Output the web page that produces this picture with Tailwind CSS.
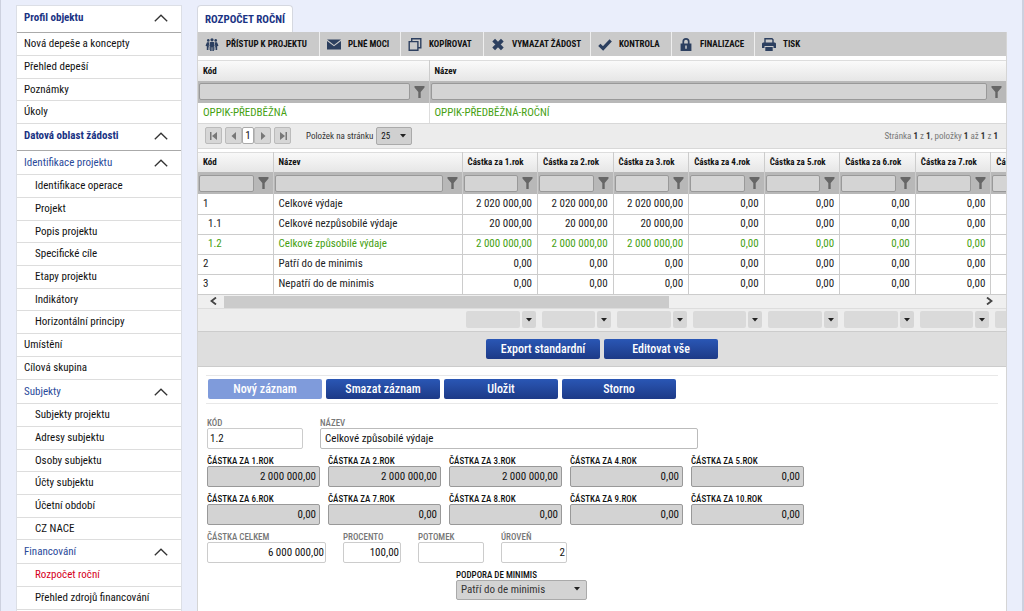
<!DOCTYPE html>
<html lang="cs">
<head>
  <meta charset="UTF-8" />
  <meta name="viewport" content="width=device-width, initial-scale=1" />
  <title>Rozpočet roční</title>
  <script src="https://cdn.jsdelivr.net/npm/@tailwindcss/browser@4"></script>
</head>
<body class="bg-[#eaeefb] text-[#111] font-['Roboto_Condensed','Liberation_Sans_Narrow',Roboto,sans-serif] text-[11px] leading-4">
  <!-- icons -->
  <svg class="hidden">
    <symbol id="i-funnel" viewBox="0 0 11 12"><path d="M.5 0h10v1.500L6.700 6v6H4.300V6L.5 1.500z" fill="#666" /></symbol>
    <symbol id="i-up" viewBox="0 0 14 8"><path d="M.8 7.200 7 1.200l6.200 6" fill="none" stroke="#333" stroke-width="1.300" /></symbol>
    <symbol id="i-people" viewBox="0 0 14 14">
      <g fill="#2c3f5f">
        <circle cx="7" cy="2" r="1.700" /><circle cx="3" cy="2.600" r="1.400" /><circle cx="11" cy="2.600" r="1.400" />
        <path d="M5 4.200h4l.9 4.600-.9.300V14H7.400v-4h-.8v4H5V9.100l-.9-.3zM1.600 4.600h2.600l-.8 4.600.8.600V13H3.300v-3h-.6v3H1.400V9L0 8.300zM12.400 4.600H9.800l.8 4.600-.8.600V13h.9v-3h.6v3h1.300V9l1.400-.7z" />
      </g>
    </symbol>
    <symbol id="i-mail" viewBox="0 0 14 10"><path d="M0 0h14L7 5.400zM0 1.500l7 5.300 7-5.300V10H0z" fill="#2c3f5f" /></symbol>
    <symbol id="i-copy" viewBox="0 0 13 13">
      <path d="M3.200 3.200V.7h9.100v9.100H9.600M.7 3.600h8.700v8.700H.7z" fill="none" stroke="#2c3f5f" stroke-width="1.400" />
    </symbol>
    <symbol id="i-cross" viewBox="0 0 12 12"><path d="M2 2l8 8M10 2l-8 8" stroke="#2c3f5f" stroke-width="3.600" /></symbol>
    <symbol id="i-check" viewBox="0 0 14 12"><path d="M1.300 6.300l3.800 3.600L12.700 1.800" fill="none" stroke="#2c3f5f" stroke-width="3.200" /></symbol>
    <symbol id="i-lock" viewBox="0 0 10 12">
      <path d="M2.500 6V3.300a2.500 2.500 0 0 1 5 0V6" fill="none" stroke="#2c3f5f" stroke-width="1.600" />
      <path d="M0 5h10v7H0zm4.300 2v3h1.400V7z" fill="#2c3f5f" fill-rule="evenodd" />
    </symbol>
    <symbol id="i-print" viewBox="0 0 14 13">
      <path d="M3 5V.7h7l1 1V5" fill="none" stroke="#2c3f5f" stroke-width="1.400" />
      <path d="M1 4.500h12l1 1V10h-2.500V8h-9v2H0V5.500zM3.300 9h7.400v4H3.300z" fill="#2c3f5f" />
    </symbol>
    <symbol id="i-down" viewBox="0 0 6 4"><path d="M0 0h6L3 3.500z" fill="#222" /></symbol>
    <symbol id="i-first" viewBox="0 0 8 8"><path d="M0 0h1.500v8H0zM7 0v8L2 4z" fill="#777" /></symbol>
    <symbol id="i-prev" viewBox="0 0 8 8"><path d="M6 0v8L1.500 4z" fill="#777" /></symbol>
    <symbol id="i-next" viewBox="0 0 8 8"><path d="M2 0v8l4.500-4z" fill="#777" /></symbol>
    <symbol id="i-last" viewBox="0 0 8 8"><path d="M8 0H6.500v8H8zM1 0v8l5-4z" fill="#777" /></symbol>
    <symbol id="i-left" viewBox="0 0 7 8"><path d="M6 .5 1.500 4 6 7.500" fill="none" stroke="#444" stroke-width="1.800" /></symbol>
    <symbol id="i-right" viewBox="0 0 7 8"><path d="M1 .5 5.500 4 1 7.500" fill="none" stroke="#444" stroke-width="1.800" /></symbol>
  </svg>

  <div class="flex h-screen overflow-hidden border-l border-r-2 border-[#cdd1df] pt-[5px] pr-[15px] pl-[15px]">
    <!-- left menu -->
    <nav id="menu" class="w-[166px] shrink-0 border-x border-t border-[#dcdfe6] bg-white"></nav>

    <main class="ml-[15px] flex min-w-0 flex-1 flex-col">
      <div class="flex">
        <a href="#" class="h-[27px] rounded-t border border-b-0 border-[#d5d8e0] bg-white px-[7px] pt-1 text-[11px] leading-5 font-bold text-[#1a3384]">ROZPOČET ROČNÍ</a>
      </div>

      <div class="min-w-0 flex-1 border-x border-[#d5d5d5] bg-white">
        <!-- toolbar -->
        <div id="toolbar" class="flex h-6 bg-[#cacaca]"></div>

        <!-- budget list -->
        <table class="mt-1 w-full table-fixed border-t border-[#ddd]">
          <colgroup><col class="w-[231px]" /><col /></colgroup>
          <thead>
            <tr class="h-5 bg-linear-to-b from-[#fafafa] to-[#e6e6e6] text-left text-[9px]">
              <th class="border-r border-[#ccc] pl-[5px]">Kód</th>
              <th class="pl-[5px]">Název</th>
            </tr>
            <tr class="h-[22px] bg-[#b8b8b8]">
              <td class="border-r border-[#ccc] px-[1px]">
                <div class="flex items-center gap-1"><input aria-label="Filtr Kód" class="h-[17px] min-w-0 flex-1 rounded-xs border border-[#999] bg-[#d4d4d4]" /><svg class="mr-[3px] h-3 w-[11px]"><use href="#i-funnel" /></svg></div>
              </td>
              <td class="px-[1px]">
                <div class="flex items-center gap-1"><input aria-label="Filtr Název" class="h-[17px] min-w-0 flex-1 rounded-xs border border-[#999] bg-[#d4d4d4]" /><svg class="mr-[3px] h-3 w-[11px]"><use href="#i-funnel" /></svg></div>
              </td>
            </tr>
          </thead>
          <tbody>
            <tr class="h-5 text-[#45a011]">
              <td class="border-r border-[#ddd] pl-[5px]">OPPIK-PŘEDBĚŽNÁ</td>
              <td class="pl-[5px]">OPPIK-PŘEDBĚŽNÁ-ROČNÍ</td>
            </tr>
          </tbody>
        </table>

        <!-- paging -->
        <div class="flex h-[26px] items-center border-y border-[#d8d8d8] bg-[#ececec] pr-2 pl-[7px] text-[9px]">
          <button aria-label="První" class="flex h-[17px] w-[17px] items-center justify-center rounded-xs border border-[#bbb] bg-[#d6d6d6]"><svg class="size-2"><use href="#i-first" /></svg></button>
          <button aria-label="Předchozí" class="ml-[3px] flex h-[17px] w-[17px] items-center justify-center rounded-xs border border-[#bbb] bg-[#d6d6d6]"><svg class="size-2"><use href="#i-prev" /></svg></button>
          <button class="h-[17px] w-3 rounded-xs border border-[#aaa] bg-white text-[11px] leading-[15px]">1</button>
          <button aria-label="Další" class="flex h-[17px] w-[17px] items-center justify-center rounded-xs border border-[#bbb] bg-[#d6d6d6]"><svg class="size-2"><use href="#i-next" /></svg></button>
          <button aria-label="Poslední" class="ml-[3px] flex h-[17px] w-[17px] items-center justify-center rounded-xs border border-[#bbb] bg-[#d6d6d6]"><svg class="size-2"><use href="#i-last" /></svg></button>
          <label for="pageSize" class="ml-[15px] text-[#333]">Položek na stránku</label>
          <div class="relative ml-[3px]">
            <select id="pageSize" class="h-[18px] w-9 appearance-none rounded-xs border border-[#aaa] bg-[#d0d0d0] pl-1 text-[9px]"><option>25</option></select>
            <svg class="pointer-events-none absolute top-[7px] right-[6px] h-1 w-[6px]"><use href="#i-down" /></svg>
          </div>
          <span class="ml-auto text-[#777]">Stránka <b class="text-[#333]">1</b> z <b class="text-[#333]">1</b>, položky <b class="text-[#333]">1</b> až <b class="text-[#333]">1</b> z <b class="text-[#333]">1</b></span>
        </div>

        <!-- budget items -->
        <div class="mt-[3px] overflow-hidden">
          <table class="w-[1020px] table-fixed border-t border-[#ddd]">
            <colgroup><col class="w-[75px]" /><col class="w-[189px]" /><col span="10" /></colgroup>
            <thead id="head"></thead>
            <tbody id="rows"></tbody>
          </table>
        </div>
        <div class="flex h-[13px] items-center bg-[#efefef] pr-[13px] pl-3">
          <svg class="h-2 w-[7px] shrink-0"><use href="#i-left" /></svg>
          <div class="mx-[7px] h-full flex-1 pt-[1px]"><div class="h-full w-[59%] bg-[#cbcbcb]"></div></div>
          <svg class="h-2 w-[7px] shrink-0"><use href="#i-right" /></svg>
        </div>
        <div class="overflow-hidden border-t border-[#ddd] bg-[#ededed]">
          <div id="sums" class="grid h-[22px] w-[1020px] grid-cols-[264px_repeat(10,1fr)] items-center"></div>
        </div>
        <div class="flex h-9 items-center justify-center gap-1 border-y border-[#ccc] bg-[#dedede]">
          <button class="h-5 w-[114px] rounded-xs bg-linear-to-b from-[#2a57b5] to-[#1d3a87] text-[12px] font-medium text-white">Export standardní</button>
          <button class="h-5 w-[114px] rounded-xs bg-linear-to-b from-[#2a57b5] to-[#1d3a87] text-[12px] font-medium text-white">Editovat vše</button>
        </div>

        <!-- record actions -->
        <div class="mx-2 mt-2 flex h-[29px] items-center gap-1 border-y border-[#e8e8e8] pl-[2px]">
          <button class="h-5 w-[114px] rounded-xs bg-[#7f9bdb] text-[12px] font-medium text-white">Nový záznam</button>
          <button class="h-5 w-[114px] rounded-xs bg-linear-to-b from-[#2a57b5] to-[#1d3a87] text-[12px] font-medium text-white">Smazat záznam</button>
          <button class="h-5 w-[114px] rounded-xs bg-linear-to-b from-[#2a57b5] to-[#1d3a87] text-[12px] font-medium text-white">Uložit</button>
          <button class="h-5 w-[114px] rounded-xs bg-linear-to-b from-[#2a57b5] to-[#1d3a87] text-[12px] font-medium text-white">Storno</button>
        </div>

        <!-- record detail -->
        <form class="mt-[14px] ml-[9px] text-[9px] leading-[10px] font-medium">
          <div class="flex gap-[17px]">
            <div><label for="kod" class="block text-[#777]">KÓD</label><input id="kod" value="1.2" class="h-[21px] w-24 rounded-xs border border-[#ccc] px-[2px] text-[11px] font-normal" /></div>
            <div><label for="nazev" class="block text-[#777]">NÁZEV</label><input id="nazev" value="Celkové způsobilé výdaje" class="h-[21px] w-[378px] rounded-xs border border-[#bbb] px-1 text-[11px] font-normal" /></div>
          </div>
          <div id="years" class="mt-[7px] grid grid-cols-[repeat(5,113px)] gap-x-2 gap-y-[7px]"></div>
          <div class="mt-[7px] flex gap-[17px]">
            <div><label for="celkem" class="block text-[#777]">ČÁSTKA CELKEM</label><input id="celkem" value="6 000 000,00" class="h-[21px] w-[119px] rounded-xs border border-[#ccc] px-[1px] text-right text-[11px] font-normal" /></div>
            <div><label for="procento" class="block text-[#777]">PROCENTO</label><input id="procento" value="100,00" class="h-[21px] w-[58px] rounded-xs border border-[#ccc] px-[1px] text-right text-[11px] font-normal" /></div>
            <div><label for="potomek" class="block text-[#777]">POTOMEK</label><input id="potomek" class="h-[21px] w-[66px] rounded-xs border border-[#ccc] px-[1px] text-[11px] font-normal" /></div>
            <div><label for="uroven" class="block text-[#777]">ÚROVEŇ</label><input id="uroven" value="2" class="h-[21px] w-[66px] rounded-xs border border-[#ccc] px-[1px] text-right text-[11px] font-normal" /></div>
          </div>
          <div class="mt-[7px] ml-[249px] w-[131px]">
            <label for="podpora" class="block">PODPORA DE MINIMIS</label>
            <div class="relative">
              <select id="podpora" class="h-5 w-full appearance-none rounded-xs border border-[#aaa] bg-[#d3d3d3] pl-1 text-[11px] font-normal text-[#333]"><option>Patří do de minimis</option></select>
              <svg class="pointer-events-none absolute top-[7px] right-[7px] h-1 w-[6px]"><use href="#i-down" /></svg>
            </div>
          </div>
        </form>
      </div>
    </main>
  </div>

  <script>
    const menu = [
      { title: "Profil objektu", main: true, items: ["Nová depeše a koncepty", "Přehled depeší", "Poznámky", "Úkoly"] },
      { title: "Datová oblast žádosti", main: true, items: [] },
      { title: "Identifikace projektu", sub: true, items: ["Identifikace operace", "Projekt", "Popis projektu", "Specifické cíle", "Etapy projektu", "Indikátory", "Horizontální principy"] },
      { items: ["Umístění", "Cílová skupina"] },
      { title: "Subjekty", sub: true, items: ["Subjekty projektu", "Adresy subjektu", "Osoby subjektu", "Účty subjektu", "Účetní období", "CZ NACE"] },
      { title: "Financování", sub: true, items: ["Rozpočet roční", "Přehled zdrojů financování"] }
    ];
    const active = "Rozpočet roční";

    document.getElementById("menu").innerHTML = menu.map(g => {
      const head = !g.title ? "" : `
        <button class="${g.main
          ? "flex h-[27px] w-full items-center justify-between border-b border-[#aaa] pr-[13px] pb-[3px] pl-[7px] font-bold text-[#1a3384]"
          : "flex h-6 w-full items-center justify-between border-b border-[#ddd] pr-[13px] pl-[7px] text-[#2a4a9a]"}">
          ${g.title}<svg class="h-2 w-[14px]"><use href="#i-up" /></svg>
        </button>`;
      const items = g.items.map(t => `
        <li class="h-[23px] border-b border-[#ddd] leading-[22px] nth-[3n]:h-[22px]">
          <a href="#" class="${g.sub ? "block pl-[18px]" : "block pl-[7px]"} ${t === active ? "text-[#d5001c]" : ""}">${t}</a>
        </li>`).join("");
      return head + `<ul>${items}</ul>`;
    }).join("");

    const tools = [
      ["people", "PŘÍSTUP K PROJEKTU", "w-[122px]"],
      ["mail", "PLNÉ MOCI", "w-[81px]"],
      ["copy", "KOPÍROVAT", "w-[83px]"],
      ["cross", "VYMAZAT ŽÁDOST", "w-[107px]"],
      ["check", "KONTROLA", "w-[81px]"],
      ["lock", "FINALIZACE", "w-[83px]"],
      ["print", "TISK", "w-[60px]"]
    ];
    document.getElementById("toolbar").innerHTML = tools.map(([icon, text, w]) => `
      <button class="${w} flex shrink-0 items-center gap-[7px] border-r border-[#eee] pl-[7px] text-[9px] font-bold whitespace-nowrap last:border-r-0">
        <svg class="h-[13px] w-[14px]"><use href="#i-${icon}" /></svg>${text}
      </button>`).join("");

    const years = [1, 2, 3, 4, 5, 6, 7, 8, 9, 10];
    const columns = ["Kód", "Název", ...years.map(y => `Částka za ${y}.rok`)];
    document.getElementById("head").innerHTML = `
      <tr class="h-5 bg-linear-to-b from-[#fafafa] to-[#e6e6e6] text-left text-[9px]">
        ${columns.map(c => `<th class="overflow-hidden border-r border-[#ccc] pl-[5px] whitespace-nowrap">${c}</th>`).join("")}
      </tr>
      <tr class="h-[22px] bg-[#b8b8b8]">
        ${columns.map(c => `
          <td class="border-r border-[#ccc] px-[1px]">
            <div class="flex items-center gap-1"><input aria-label="Filtr ${c}" class="h-[17px] min-w-0 flex-1 rounded-xs border border-[#999] bg-[#d4d4d4]" /><svg class="mr-[3px] h-3 w-[11px] shrink-0"><use href="#i-funnel" /></svg></div>
          </td>`).join("")}
      </tr>`;

    const rows = [
      { code: "1", name: "Celkové výdaje", amount: "2 020 000,00" },
      { code: "1.1", name: "Celkové nezpůsobilé výdaje", amount: "20 000,00" },
      { code: "1.2", name: "Celkové způsobilé výdaje", amount: "2 000 000,00", selected: true },
      { code: "2", name: "Patří do de minimis", amount: "0,00" },
      { code: "3", name: "Nepatří do de minimis", amount: "0,00" }
    ];
    document.getElementById("rows").innerHTML = rows.map(r => `
      <tr class="h-5 border-b border-[#ccc] ${r.selected ? "text-[#45a011]" : "text-[#222]"}">
        <td class="border-r border-[#ccc] ${r.code.length > 1 ? "pl-[10px]" : "pl-[5px]"}">${r.code}</td>
        <td class="border-r border-[#ccc] pl-[5px]">${r.name}</td>
        ${years.map(y => `<td class="border-r border-[#ccc] pr-[5px] text-right whitespace-nowrap">${y < 4 ? r.amount : "0,00"}</td>`).join("")}
      </tr>`).join("");

    document.getElementById("sums").innerHTML = "<span></span>" + years.map(y => `
      <div class="flex gap-[2px] pr-[2px] pl-1">
        <span class="h-[17px] flex-1 rounded-xs bg-[#dadada]"></span>
        <button aria-label="Součet ${y}" class="flex h-[17px] w-[14px] items-center justify-center rounded-xs bg-[#d6d6d6]"><svg class="h-1 w-[6px]"><use href="#i-down" /></svg></button>
      </div>`).join("");

    document.getElementById("years").innerHTML = years.map(y => `
      <div>
        <label for="rok${y}" class="block">ČÁSTKA ZA ${y}.ROK</label>
        <input id="rok${y}" value="${y < 4 ? "2 000 000,00" : "0,00"}" class="h-[21px] w-full rounded-xs border border-[#999] bg-[#d3d3d3] px-[3px] text-right text-[11px] font-normal" />
      </div>`).join("");
  </script>
</body>
</html>
